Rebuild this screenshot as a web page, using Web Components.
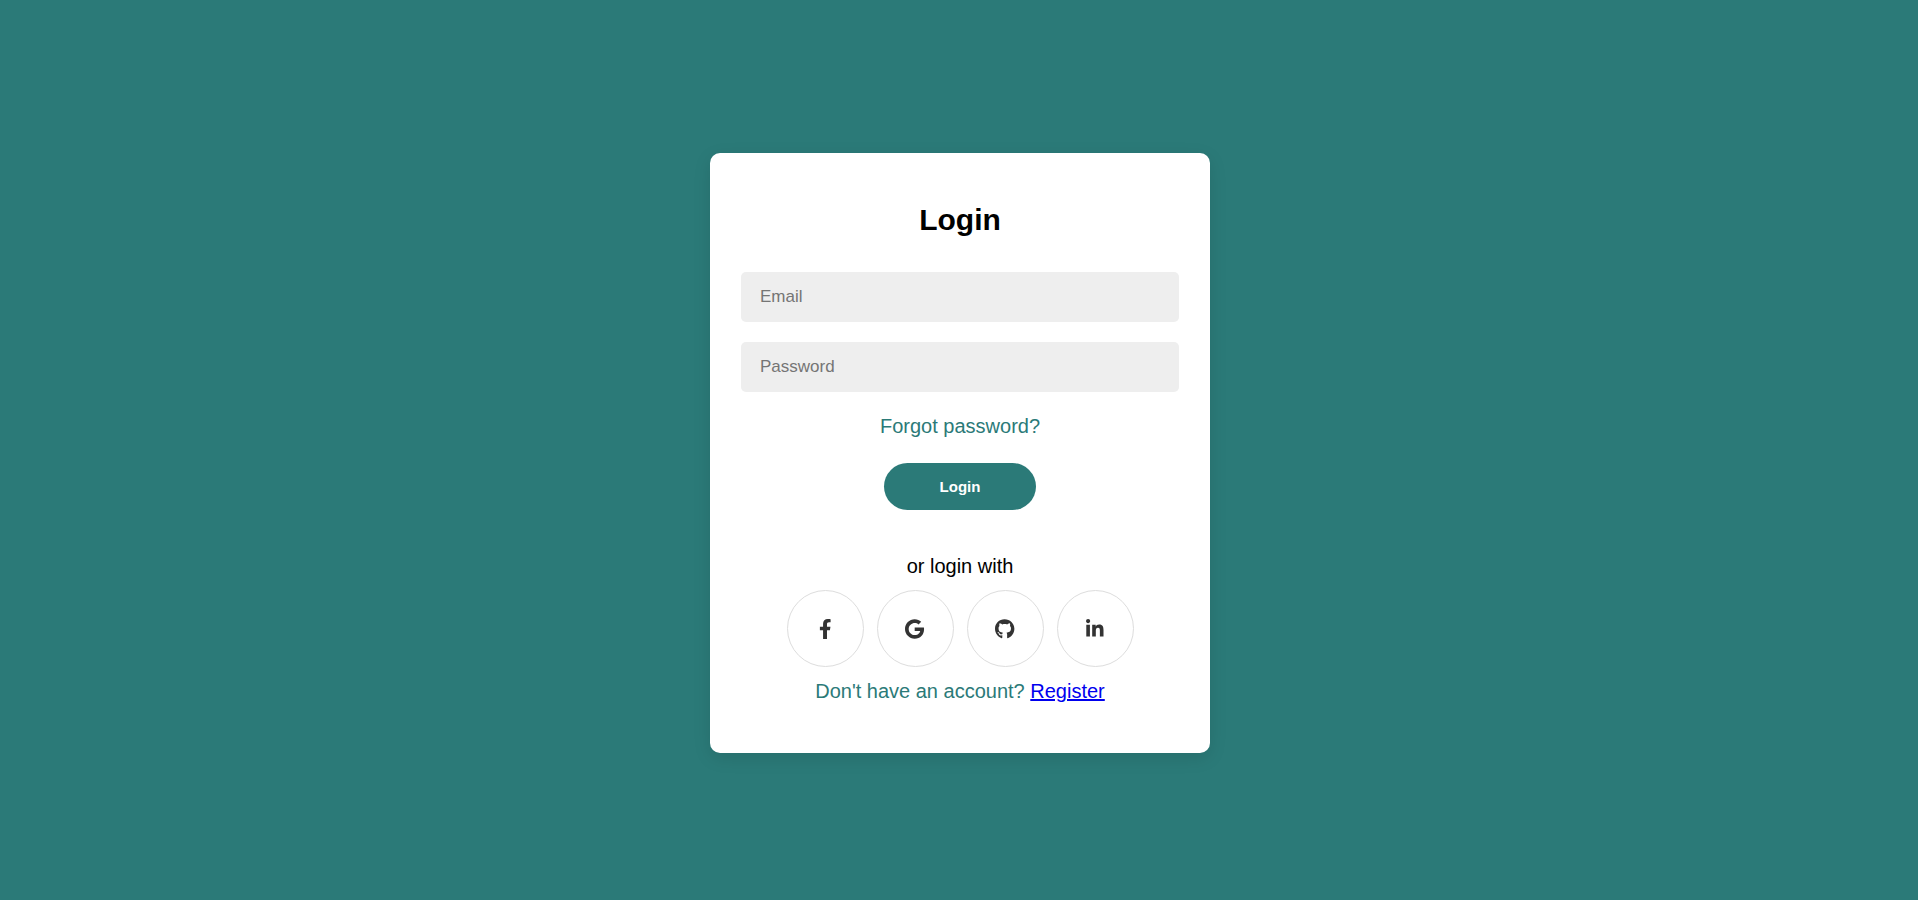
<!DOCTYPE html>
<html lang="en">
<head>
    <meta charset="UTF-8">
    <meta name="viewport" content="width=device-width, initial-scale=1.0">
    <title>Login</title>
    <style>
        * {
            box-sizing: border-box;
        }
        body {
            margin: 0;
            min-height: 100vh;
            display: flex;
            justify-content: center;
            align-items: center;
            padding: 6px 0 0 2px;
            background: #2b7a78;
            font-family: Arial, "Liberation Sans", sans-serif;
            font-size: 20px;
            line-height: 23px;
            --primary: #2b7a78;
        }
    </style>
</head>
<body>
    <login-card heading="Login">
        <form-field name="email" type="email" label="Email"></form-field>
        <form-field name="password" type="password" label="Password"></form-field>
        <text-link href="#forgot">Forgot password?</text-link>
        <pill-button>Login</pill-button>
        <social-logins slot="social">or login with</social-logins>
        <register-note slot="footer" href="#register" action="Register">Don't have an account?</register-note>
    </login-card>

    <script>
        class LoginCard extends HTMLElement {
            connectedCallback() {
                this.attachShadow({ mode: 'open' });
                this.shadowRoot.innerHTML = `
                    <style>
                        :host {
                            display: block;
                            box-sizing: border-box;
                            width: 100%;
                            max-width: 500px;
                            padding: 50px 31px;
                            background: #fff;
                            border-radius: 10px;
                            box-shadow: 0 5px 18px rgba(0, 0, 0, 0.1);
                            text-align: center;
                        }
                        h2 {
                            margin: 0 0 35px;
                            font-size: 30px;
                            line-height: 34px;
                            color: #000;
                        }
                        form {
                            display: flex;
                            flex-direction: column;
                            align-items: center;
                            margin-bottom: 45px;
                        }
                    </style>
                    <h2>${this.getAttribute('heading')}</h2>
                    <form>
                        <slot></slot>
                    </form>
                    <slot name="social"></slot>
                    <slot name="footer"></slot>
                `;
            }
        }
        customElements.define('login-card', LoginCard);

        class FormField extends HTMLElement {
            connectedCallback() {
                const name = this.getAttribute('name');
                const label = this.getAttribute('label');
                this.attachShadow({ mode: 'open' });
                this.shadowRoot.innerHTML = `
                    <style>
                        :host {
                            display: block;
                            align-self: stretch;
                            margin-bottom: 20px;
                        }
                        input {
                            display: block;
                            box-sizing: border-box;
                            width: 100%;
                            height: 50px;
                            padding: 0 19px;
                            border: none;
                            border-radius: 5px;
                            background: #eee;
                            font-family: inherit;
                            font-size: 17px;
                        }
                        input::placeholder {
                            color: #757575;
                        }
                    </style>
                    <input id="${name}" name="${name}" type="${this.getAttribute('type')}" placeholder="${label}" aria-label="${label}">
                `;
            }
        }
        customElements.define('form-field', FormField);

        class TextLink extends HTMLElement {
            connectedCallback() {
                this.attachShadow({ mode: 'open' });
                this.shadowRoot.innerHTML = `
                    <style>
                        :host {
                            display: block;
                            margin: 3px 0 25px;
                        }
                        a {
                            color: var(--primary);
                            text-decoration: none;
                        }
                    </style>
                    <a href="${this.getAttribute('href')}"><slot></slot></a>
                `;
            }
        }
        customElements.define('text-link', TextLink);

        class PillButton extends HTMLElement {
            connectedCallback() {
                this.attachShadow({ mode: 'open' });
                this.shadowRoot.innerHTML = `
                    <style>
                        :host {
                            display: block;
                        }
                        button {
                            display: block;
                            padding: 12px 56px;
                            border: none;
                            border-radius: 25px;
                            background: var(--primary);
                            color: #fff;
                            font-family: inherit;
                            font-size: 15px;
                            font-weight: bold;
                            line-height: 23px;
                            cursor: pointer;
                        }
                    </style>
                    <button type="submit"><slot></slot></button>
                `;
            }
        }
        customElements.define('pill-button', PillButton);

        const ICONS = {
            Facebook: {
                width: 320,
                path: 'M279.14 288l14.22-92.66h-88.91v-60.13c0-25.35 12.42-50.06 52.24-50.06h40.42V6.26S260.43 0 225.36 0c-73.22 0-121.08 44.38-121.08 124.72v70.62H22.89V288h81.39v224h100.17V288z'
            },
            Google: {
                width: 488,
                path: 'M488 261.8C488 403.3 391.1 504 248 504 110.8 504 0 393.2 0 256S110.8 8 248 8c66.8 0 123 24.5 166.3 64.9l-67.5 64.9C258.5 52.6 94.3 116.6 94.3 256c0 86.5 69.1 156.6 153.7 156.6 98.2 0 135-70.4 140.8-106.9H248v-85.3h236.1c2.3 12.7 3.9 24.9 3.9 41.4z'
            },
            GitHub: {
                width: 496,
                path: 'M165.9 397.4c0 2-2.3 3.6-5.2 3.6-3.3.3-5.6-1.3-5.6-3.6 0-2 2.3-3.6 5.2-3.6 3-.3 5.6 1.3 5.6 3.6zm-31.1-4.5c-.7 2 1.3 4.3 4.3 4.9 2.6 1 5.6 0 6.2-2s-1.3-4.3-4.3-5.2c-2.6-.7-5.5.3-6.2 2.3zm44.2-1.7c-2.9.7-4.9 2.6-4.6 4.9.3 2 2.9 3.3 5.9 2.6 2.9-.7 4.9-2.6 4.6-4.6-.3-1.9-3-3.2-5.9-2.9zM244.8 8C106.1 8 0 113.3 0 252c0 110.9 69.8 205.8 169.5 239.2 12.8 2.3 17.3-5.6 17.3-12.1 0-6.2-.3-40.4-.3-61.4 0 0-70 15-84.7-29.8 0 0-11.4-29.1-27.8-36.6 0 0-22.9-15.7 1.6-15.4 0 0 24.9 2 38.6 25.8 21.9 38.6 58.6 27.5 72.9 20.9 2.3-16 8.8-27.1 16-33.7-55.9-6.2-112.3-14.3-112.3-110.5 0-27.5 7.6-41.3 23.6-58.9-2.6-6.5-11.1-33.3 2.6-67.9 20.9-6.5 69 27 69 27 20-5.6 41.5-8.5 62.8-8.5s42.8 2.9 62.8 8.5c0 0 48.1-33.6 69-27 13.7 34.7 5.2 61.4 2.6 67.9 16 17.7 25.8 31.5 25.8 58.9 0 96.5-58.9 104.2-114.8 110.5 9.2 7.9 17 22.9 17 46.4 0 33.7-.3 75.4-.3 83.6 0 6.5 4.6 14.4 17.3 12.1C428.2 457.8 496 362.9 496 252 496 113.3 383.5 8 244.8 8z'
            },
            LinkedIn: {
                width: 448,
                path: 'M100.28 448H7.4V148.9h92.88zM53.79 108.1C24.09 108.1 0 83.5 0 53.8a53.79 53.79 0 0 1 107.58 0c0 29.7-24.1 54.3-53.79 54.3zM447.9 448h-92.68V302.4c0-34.7-.7-79.2-48.29-79.2-48.29 0-55.69 37.7-55.69 76.7V448h-92.78V148.9h89.08v40.8h1.3c12.4-23.5 42.69-48.3 87.88-48.3 94 0 111.28 61.9 111.28 142.3V448z'
            }
        };

        class SocialLogins extends HTMLElement {
            connectedCallback() {
                const links = Object.entries(ICONS).map(([name, icon]) => `
                    <a href="#${name.toLowerCase()}" aria-label="${name}">
                        <svg viewBox="0 0 ${icon.width} 512" aria-hidden="true"><path d="${icon.path}"/></svg>
                    </a>
                `).join('');
                this.attachShadow({ mode: 'open' });
                this.shadowRoot.innerHTML = `
                    <style>
                        :host {
                            display: block;
                            margin-bottom: 13px;
                        }
                        p {
                            margin: 0 0 12px;
                        }
                        .icons {
                            display: flex;
                            justify-content: center;
                            gap: 13px;
                        }
                        a {
                            display: flex;
                            align-items: center;
                            justify-content: center;
                            box-sizing: border-box;
                            width: 77px;
                            height: 77px;
                            border: 1px solid #ddd;
                            border-radius: 50%;
                            color: #333;
                        }
                        svg {
                            height: 20px;
                            fill: currentColor;
                        }
                    </style>
                    <p><slot></slot></p>
                    <div class="icons">${links}</div>
                `;
            }
        }
        customElements.define('social-logins', SocialLogins);

        class RegisterNote extends HTMLElement {
            connectedCallback() {
                this.attachShadow({ mode: 'open' });
                this.shadowRoot.innerHTML = `
                    <style>
                        :host {
                            display: block;
                            color: var(--primary);
                        }
                        a {
                            color: #0000ee;
                        }
                    </style>
                    <slot></slot> <a href="${this.getAttribute('href')}">${this.getAttribute('action')}</a>
                `;
            }
        }
        customElements.define('register-note', RegisterNote);
    </script>
</body>
</html>
